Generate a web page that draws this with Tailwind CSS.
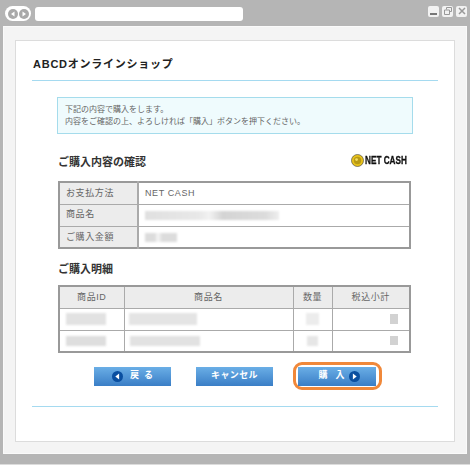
<!DOCTYPE html>
<html lang="ja">
<head>
<meta charset="utf-8">
<script src="https://cdn.jsdelivr.net/npm/@tailwindcss/browser@4"></script>
</head>
<body class="w-[470px] h-[465px] overflow-hidden bg-[#dcdcdc] font-['Liberation_Sans','Noto_Sans_CJK_JP',sans-serif]">
<div class="w-[470px] h-[464px] bg-[#b5b5b5] pt-px flex flex-col">
  <div class="h-[25px] flex items-center pl-[5px] pr-[3px]">
    <div class="w-[26px] h-[15px] rounded-full bg-white flex items-center justify-center gap-px">
      <span class="w-[10px] h-[10px] rounded-full bg-[#a9a9a9] flex items-center justify-center"><svg width="6" height="6" viewBox="0 0 6 6"><path d="M4.500 .5 1 3l3.500 2.500z" fill="#fff"/></svg></span>
      <span class="w-[10px] h-[10px] rounded-full bg-[#a9a9a9] flex items-center justify-center"><svg width="6" height="6" viewBox="0 0 6 6"><path d="M1.500 .5 5 3 1.500 5.500z" fill="#fff"/></svg></span>
    </div>
    <div class="w-[208px] h-[14px] ml-[4px] bg-white rounded-[3px]"></div>
    <div class="ml-auto flex gap-[3px] -mt-[5px]">
      <span class="w-[11px] h-[11px] bg-[#f2f2f2] rounded-[2px] flex items-end justify-center pb-[2px]"><span class="w-[7px] h-[2px] bg-[#777]"></span></span>
      <span class="w-[11px] h-[11px] bg-[#f2f2f2] rounded-[2px] flex items-center justify-center"><svg width="8" height="8" viewBox="0 0 8 8" fill="none" stroke="#999"><path d="M2.500 2.500V.5h5v4h-2M.5 3h5v4.500h-5z"/></svg></span>
      <span class="w-[11px] h-[11px] bg-[#f2f2f2] rounded-[2px] flex items-center justify-center"><svg width="8" height="8" viewBox="0 0 8 8" fill="none" stroke="#999" stroke-width="1.500"><path d="M1 1l6 6M7 1 1 7"/></svg></span>
    </div>
  </div>
  <div class="mx-[3px] h-[428px] bg-[#f4f4f4] border border-[#fafafa] px-[11px] pt-[13px]">
    <div class="h-[402px] bg-white border border-[#dcdcdc] px-[17px] flex flex-col">
      <h1 class="h-[40px] pt-[16px] pl-[1px] text-[11px] leading-[14px] font-bold tracking-[0.75px] text-[#222] border-b border-[#a5daf0] mb-[16px] -mx-px">ABCDオンラインショップ</h1>
      <div class="mx-[24px] h-[37px] shrink-0 bg-[#effbfd] border border-[#a5dcec] px-[7px] pt-[6px] text-[8px] leading-[12px] text-[#666]">
        <p>下記の内容で購入をします。</p>
        <p>内容をご確認の上、よろしければ「購入」ボタンを押下ください。</p>
      </div>
      <div class="mx-[25px] mt-[18px] h-[29px] flex justify-between items-start">
        <h2 class="text-[11px] leading-[16px] mt-[2px] font-bold text-[#333]">ご購入内容の確認</h2>
        <div class="flex items-center gap-[1px] w-[58px] mr-[3px] mt-[1px]">
          <svg class="shrink-0" width="13" height="13" viewBox="0 0 14 14"><circle cx="7" cy="7" r="6.500" fill="#e8c21c" stroke="#333" stroke-width=".6"/><circle cx="7" cy="7" r="4" fill="#b89a14"/><circle cx="6" cy="6" r="1.500" fill="#f5e060"/></svg>
          <span class="font-['Liberation_Sans',sans-serif] font-bold text-[10.500px] leading-[14px] text-[#111] [-webkit-text-stroke:0.3px_#111] scale-x-[.78] origin-left whitespace-nowrap">NET CASH</span>
        </div>
      </div>
      <table class="mx-[25px] w-[353px] shrink-0 border-collapse border-2 border-[#999] text-[9px] text-[#666] tracking-[0.6px] table-fixed">
        <tbody>
          <tr class="h-[22px] border-b border-[#aaa]">
            <th class="w-[79px] bg-[#ececec] border-r-2 border-[#aaa] text-left font-normal pl-[6px]">お支払方法</th>
            <td class="pl-[6px]">NET CASH</td>
          </tr>
          <tr class="h-[22px] border-b border-[#aaa]">
            <th class="bg-[#ececec] border-r-2 border-[#aaa] text-left font-normal pl-[6px]">商品名</th>
            <td class="pl-[6px]"><div class="w-[134px] h-[9px] blur-[1px] bg-[linear-gradient(90deg,#e0e0e0,#e8e8e8_40%,#f2f2f2_48%,#d4d4d4_58%,#dcdcdc_90%,#eee)]"></div></td>
          </tr>
          <tr class="h-[22px]">
            <th class="bg-[#ececec] border-r-2 border-[#aaa] text-left font-normal pl-[6px] pt-[2px]">ご購入金額</th>
            <td class="pl-[6px] pt-[2px]"><div class="w-[32px] h-[9px] blur-[1px] bg-[linear-gradient(90deg,#dcdcdc_30%,#f6f6f6_40%,#dcdcdc_55%)]"></div></td>
          </tr>
        </tbody>
      </table>
      <h2 class="mx-[25px] mt-[12px] h-[24px] text-[11px] leading-[16px] font-bold text-[#333]">ご購入明細</h2>
      <table class="mx-[25px] w-[353px] shrink-0 border-collapse border-2 border-[#999] text-[9px] text-[#666] tracking-[0.6px] table-fixed">
        <thead>
          <tr class="h-[22px] bg-[#ececec] border-b border-[#aaa]">
            <th class="w-[65px] border-r border-[#aaa] font-normal">商品ID</th>
            <th class="w-[169px] border-r border-[#aaa] font-normal">商品名</th>
            <th class="w-[39px] border-r border-[#aaa] font-normal">数量</th>
            <th class="font-normal">税込小計</th>
          </tr>
        </thead>
        <tbody>
          <tr class="h-[22px] border-b border-[#aaa]">
            <td class="border-r border-[#aaa] pl-[6px]"><div class="w-[40px] h-[12px] blur-[1px] bg-[#e2e2e2]"></div></td>
            <td class="border-r border-[#aaa] pl-[4px]"><div class="w-[68px] h-[12px] blur-[1px] bg-[#e4e4e4]"></div></td>
            <td class="border-r border-[#aaa]"><div class="mx-auto w-[13px] h-[12px] blur-[1px] bg-[#ececec]"></div></td>
            <td class="pr-[11px]"><div class="ml-auto w-[8px] h-[10px] blur-[0.5px] bg-[#d2d2d2]"></div></td>
          </tr>
          <tr class="h-[22px]">
            <td class="border-r border-[#aaa] pl-[6px]"><div class="w-[40px] h-[10px] blur-[1px] bg-[#dedede]"></div></td>
            <td class="border-r border-[#aaa] pl-[5px]"><div class="w-[70px] h-[10px] blur-[1px] bg-[#e2e2e2]"></div></td>
            <td class="border-r border-[#aaa]"><div class="mx-auto w-[11px] h-[10px] blur-[1px] bg-[#e6e6e6]"></div></td>
            <td class="pr-[11px]"><div class="ml-auto w-[8px] h-[9px] blur-[0.5px] bg-[#d2d2d2]"></div></td>
          </tr>
        </tbody>
      </table>
      <div class="flex items-center mt-[9px] h-[28px] ml-[61px] text-white font-bold text-[9px]">
        <div class="w-[77px] h-[19px] flex items-center justify-center gap-[7px] bg-[linear-gradient(#6aaee6,#3a7ec6)] tracking-[5px]">
          <svg width="11" height="11" viewBox="0 0 10 10"><circle cx="5" cy="5" r="5" fill="#0a4fa0"/><path d="M6.500 2.200 3 5l3.500 2.800z" fill="#fff"/></svg><span class="-mr-[5px]">戻る</span>
        </div>
        <div class="ml-[25px] w-[77px] h-[19px] flex items-center justify-center bg-[linear-gradient(#6aaee6,#3a7ec6)] tracking-[0.4px]">キャンセル</div>
        <div class="ml-[20px] w-[89px] h-[28px] rounded-[9px] border-[3px] border-[#f0883a] bg-white pl-[2px] flex items-center">
          <div class="w-[78px] h-[19px] flex items-center justify-center gap-[4px] bg-[linear-gradient(#6aaee6,#3a7ec6)] tracking-[8px]"><span class="-mr-[8px] ml-[4px]">購入</span><svg width="11" height="11" viewBox="0 0 10 10"><circle cx="5" cy="5" r="5" fill="#0a4fa0"/><path d="M3.500 2.200 7 5 3.500 7.800z" fill="#fff"/></svg></div>
        </div>
      </div>
      <div class="mt-[16px] -mx-px border-b border-[#a5daf0]"></div>
    </div>
  </div>
</div>
</body>
</html>
